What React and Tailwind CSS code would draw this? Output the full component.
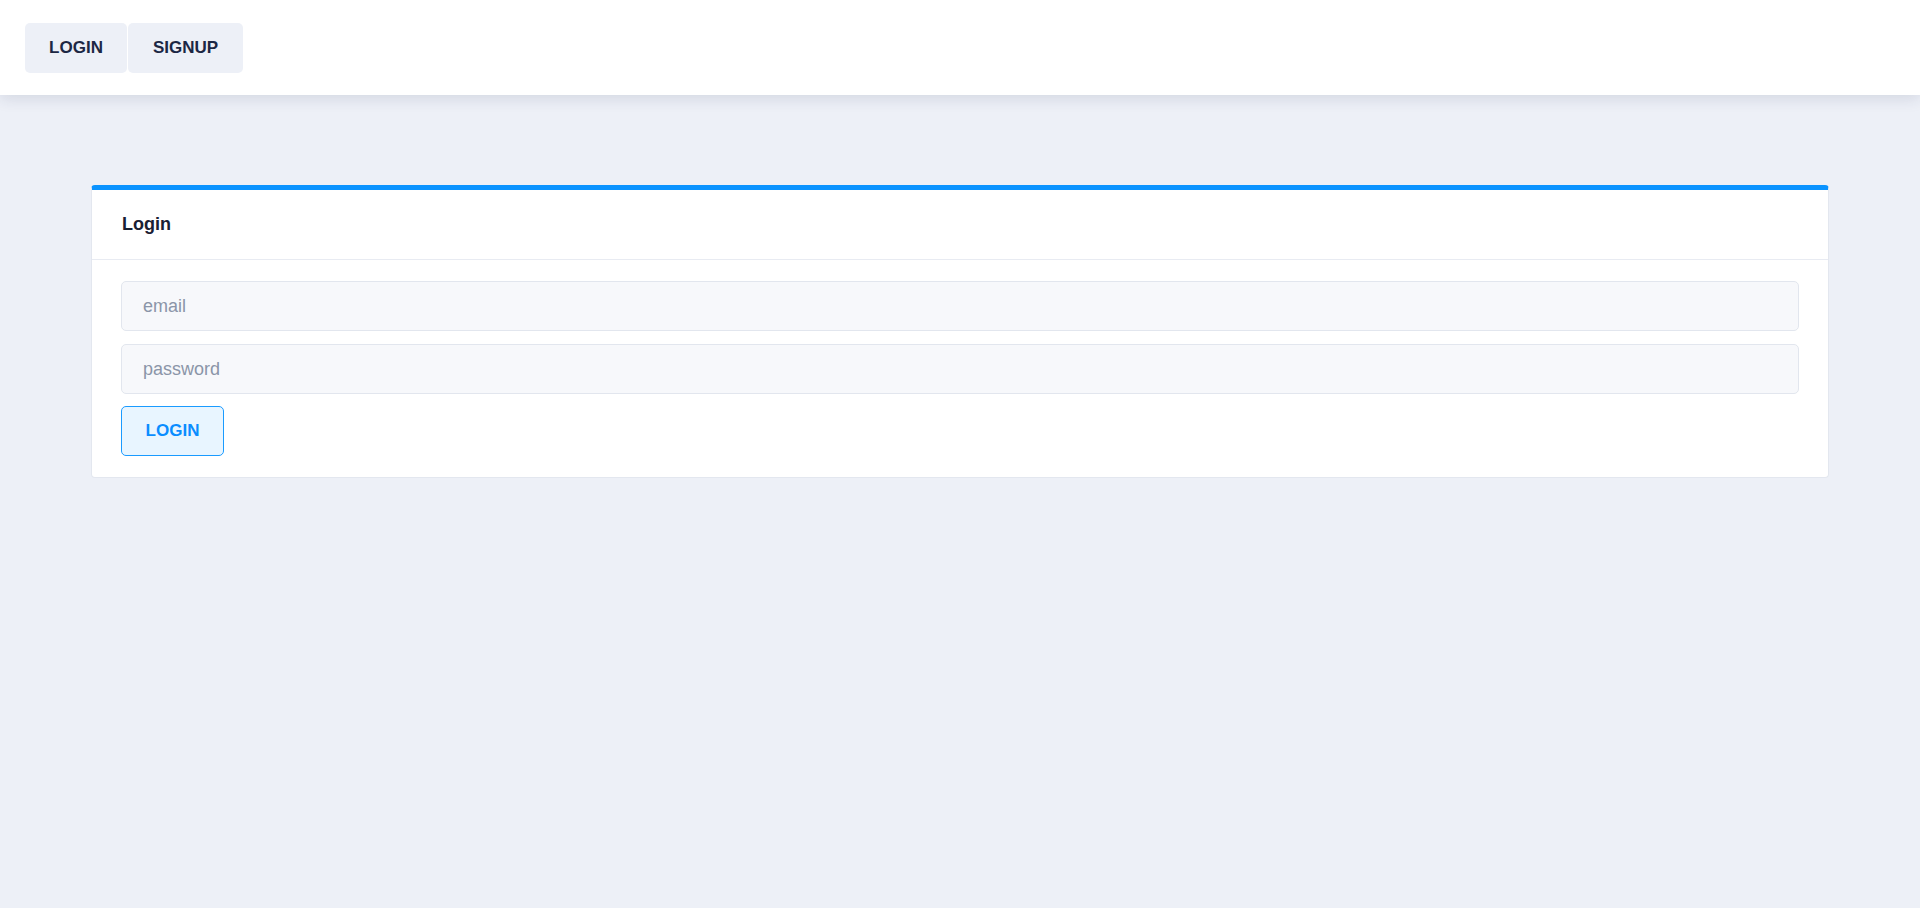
import React from "react";

const NavButton = ({ children, className = "" }) => (
    <button className={`h-[50px] rounded-[5px] bg-[#edf0f7] text-[17px] font-bold text-[#1c2744] ${className}`}>
        {children}
    </button>
);

export default function App() {
    return (
        <div className="min-h-[908px] bg-[#edf0f7] font-['Liberation_Sans',Arial,sans-serif]">
            {/* top bar */}
            <header className="relative z-10 flex h-[95px] items-center gap-px bg-white px-[25px] shadow-[0_4px_14px_rgba(30,40,80,0.12)]">
                <NavButton className="w-[102px]">LOGIN</NavButton>
                <NavButton className="w-[115px]">SIGNUP</NavButton>
            </header>

            <main className="px-[91px] pt-[90px]">
                <div className="rounded-[4px] border border-[#e3e7ef] border-t-[5px] border-t-[#0a93ff] bg-white">
                    <div className="flex h-[70px] items-center border-b border-[#e8ebf2] px-[30px]">
                        <h2 className="text-[18px] font-bold text-[#1a2033]">Login</h2>
                    </div>
                    <form className="flex flex-col items-start gap-[13px] px-[29px] pt-[21px] pb-[21px]">
                        <input
                            type="text"
                            placeholder="email"
                            className="h-[50px] w-full rounded-[5px] border border-[#e2e6ee] bg-[#f7f8fb] px-[21px] text-[18px] text-[#1a2033] placeholder:text-[#8b95a8] outline-none"
                        />
                        <input
                            type="password"
                            placeholder="password"
                            className="h-[50px] w-full rounded-[5px] border border-[#e2e6ee] bg-[#f7f8fb] px-[21px] text-[18px] text-[#1a2033] placeholder:text-[#8b95a8] outline-none"
                        />
                        <button
                            type="button"
                            className="-mt-[1px] h-[50px] w-[103px] rounded-[5px] border border-[#1a9bff] bg-[#e8f5ff] text-[17px] font-bold text-[#0a8dff]"
                        >
                            LOGIN
                        </button>
                    </form>
                </div>
            </main>
        </div>
    );
}
